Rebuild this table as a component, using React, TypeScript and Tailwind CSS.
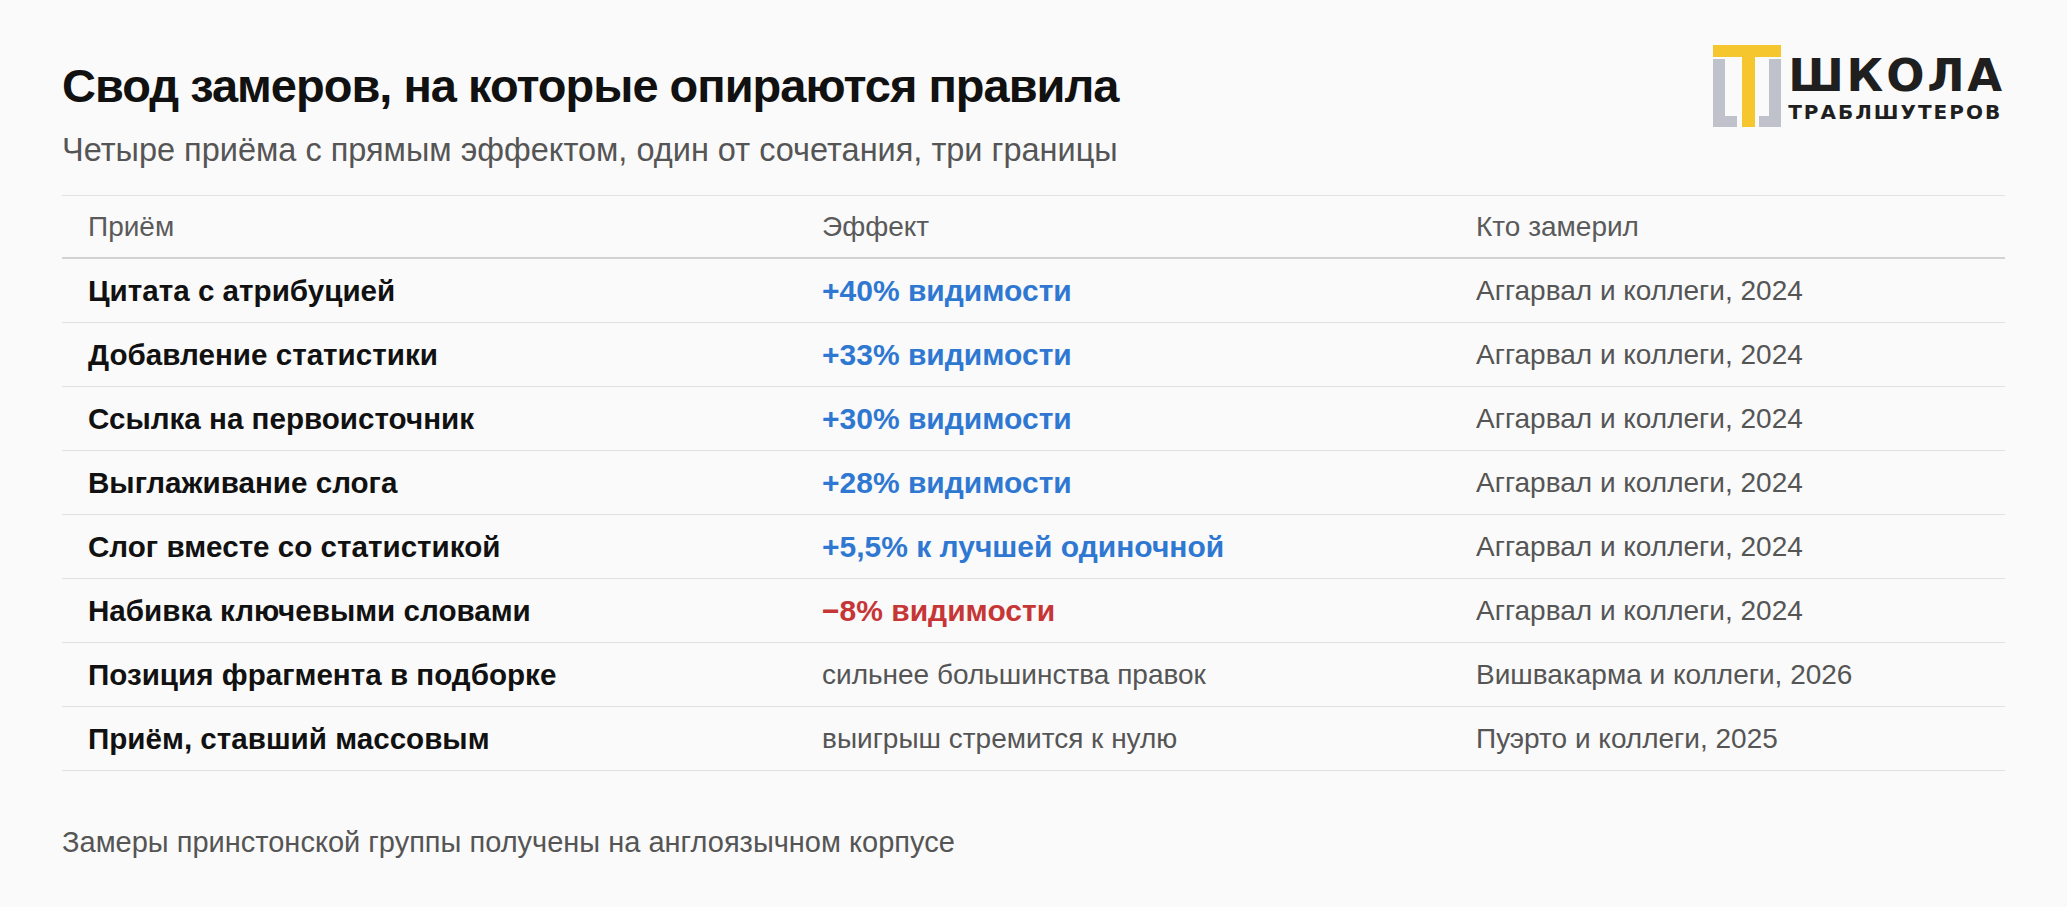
import { FC } from "react";

type Tone = "blue" | "red" | "plain";

interface IRow {
  method: string;
  effect: string;
  tone: Tone;
  source: string;
}

const rows: IRow[] = [
  { method: "Цитата с атрибуцией", effect: "+40% видимости", tone: "blue", source: "Аггарвал и коллеги, 2024" },
  { method: "Добавление статистики", effect: "+33% видимости", tone: "blue", source: "Аггарвал и коллеги, 2024" },
  { method: "Ссылка на первоисточник", effect: "+30% видимости", tone: "blue", source: "Аггарвал и коллеги, 2024" },
  { method: "Выглаживание слога", effect: "+28% видимости", tone: "blue", source: "Аггарвал и коллеги, 2024" },
  { method: "Слог вместе со статистикой", effect: "+5,5% к лучшей одиночной", tone: "blue", source: "Аггарвал и коллеги, 2024" },
  { method: "Набивка ключевыми словами", effect: "−8% видимости", tone: "red", source: "Аггарвал и коллеги, 2024" },
  { method: "Позиция фрагмента в подборке", effect: "сильнее большинства правок", tone: "plain", source: "Вишвакарма и коллеги, 2026" },
  { method: "Приём, ставший массовым", effect: "выигрыш стремится к нулю", tone: "plain", source: "Пуэрто и коллеги, 2025" },
];

const toneClass: Record<Tone, string> = {
  blue: "text-[30px] font-bold text-[#2f78d2]",
  red: "text-[30px] font-bold text-[#c73636]",
  plain: "text-[#555555]",
};

const Logo: FC = () => (
  <div className="flex items-start gap-[7px]">
    <svg width="68" height="82" viewBox="0 0 68 82" aria-hidden>
      {/* gray brackets */}
      <path d="M0 14h12v57h12v11H0z" fill="#bfc2cb" />
      <path d="M56 14h12v68H46V71h10z" fill="#bfc2cb" />
      {/* yellow T */}
      <rect x="0" y="0" width="68" height="12" fill="#f6c62f" />
      <rect x="29" y="12" width="13" height="70" fill="#f6c62f" />
    </svg>
    <div className="flex flex-col pt-[8px] font-['DejaVu_Sans',sans-serif] text-[#1f1f1f]">
      <span className="text-[45px] font-bold leading-[45px] tracking-[2.8px]">ШКОЛА</span>
      <span className="mt-[4px] text-[20px] font-bold leading-[20px] tracking-[2px]">ТРАБЛШУТЕРОВ</span>
    </div>
  </div>
);

export default function App() {
  return (
    <div className="min-h-screen w-full bg-[#fafafa] font-['Liberation_Sans',Arial,sans-serif]">
      <div className="px-[62px] pt-[45px]">
        {/* header */}
        <div className="flex items-start justify-between">
          <div className="pt-[14px]">
            <h1 className="text-[47px] font-bold leading-[54px] tracking-[-1px] text-[#111111]">
              Свод замеров, на которые опираются правила
            </h1>
            <p className="mt-[17px] text-[32.5px] leading-[40px] text-[#555555]">
              Четыре приёма с прямым эффектом, один от сочетания, три границы
            </p>
          </div>
          <Logo />
        </div>

        {/* table */}
        <div className="mt-[25px] text-[28px] leading-[32px]">
          <div className="grid h-[64px] grid-cols-[734px_654px_1fr] items-center border-t border-b-2 border-t-[#e2e2e2] border-b-[#d2d2d2] text-[#5a5a5a]">
            <div className="pl-[26px]">Приём</div>
            <div className="pl-[26px]">Эффект</div>
            <div className="pl-[26px]">Кто замерил</div>
          </div>
          {rows.map((row) => (
            <div
              key={row.method}
              className="grid h-[64px] grid-cols-[734px_654px_1fr] items-center border-b border-[#e2e2e2]"
            >
              <div className="pl-[26px] text-[29.6px] font-bold text-[#111111]">{row.method}</div>
              <div className={`pl-[26px] ${toneClass[row.tone]}`}>{row.effect}</div>
              <div className="pl-[26px] text-[#555555]">{row.source}</div>
            </div>
          ))}
        </div>

        <p className="mt-[53px] text-[29px] leading-[36px] text-[#555555]">
          Замеры принстонской группы получены на англоязычном корпусе
        </p>
      </div>
    </div>
  );
}
